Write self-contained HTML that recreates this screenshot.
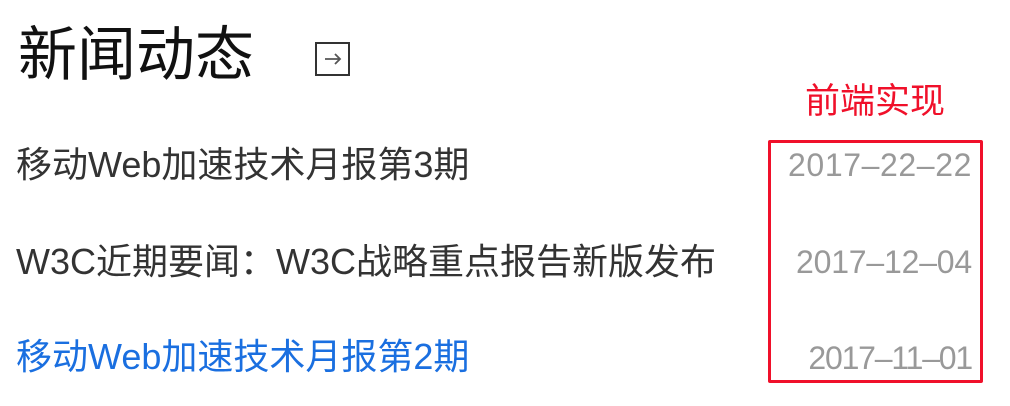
<!DOCTYPE html>
<html><head><meta charset="utf-8"><style>
body{margin:0;width:1010px;height:406px;background:#fff;position:relative;overflow:hidden;font-family:"Liberation Sans","Noto Sans CJK SC",sans-serif}
.a{position:absolute;white-space:nowrap;line-height:1}
.d{right:38px;font-size:32px;color:#999;letter-spacing:0.6px}
</style></head><body>
<div class="a" style="left:18px;top:26px;font-size:59px;color:#111">新闻动态</div>
<div class="a" style="left:315px;top:42px;width:31px;height:30px;border:2px solid #333;"></div>
<svg class="a" style="left:315px;top:42px" width="35" height="34"><path d="M10 17H25M20 12L25 17L20 22" stroke="#555" stroke-width="1.8" fill="none"/></svg>
<div class="a" style="left:805px;top:84px;font-size:35px;color:#f0102a">前端实现</div>
<div class="a" style="left:768px;top:140px;width:209px;height:237px;border:3px solid #f0102a;border-radius:2px"></div>
<div class="a" style="left:16px;top:147px;font-size:36px;color:#333">移动Web加速技术月报第3期</div>
<div class="a" style="left:16px;top:244px;font-size:36px;color:#333">W3C近期要闻：W3C战略重点报告新版发布</div>
<div class="a" style="left:16px;top:339px;font-size:36px;color:#1a6fe0">移动Web加速技术月报第2期</div>
<div class="a d" style="top:149px">2017–22–22</div>
<div class="a d" style="top:246px;letter-spacing:-0.2px">2017–12–04</div>
<div class="a d" style="top:342px;letter-spacing:-1.2px">2017–11–01</div>
</body></html>
